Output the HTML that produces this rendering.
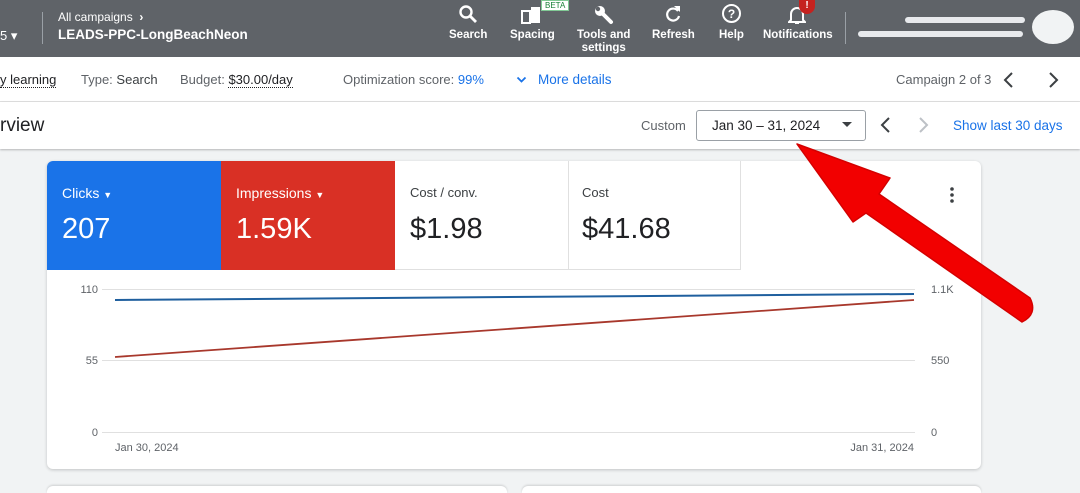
<!DOCTYPE html>
<html><head><meta charset="utf-8"><style>
*{margin:0;padding:0;box-sizing:border-box}
html,body{width:1080px;height:493px;overflow:hidden}
body{background:#f1f3f4;font-family:"Liberation Sans",Arial,sans-serif;position:relative;color:#3c4043}
.a{position:absolute;white-space:nowrap}
.hdr{position:absolute;left:0;top:0;width:1080px;height:57px;background:#5f6368}
.w{color:#fff}
.nl{font-size:11.5px;color:#fff;text-align:center;font-weight:bold;line-height:13px}
.row2{position:absolute;left:0;top:57px;width:1080px;height:45px;background:#fff;border-bottom:1px solid #e0e0e0}
.row3{position:absolute;left:0;top:102px;width:1080px;height:47px;background:#fff;box-shadow:0 1px 2px rgba(0,0,0,.25)}
.t13{font-size:13px;color:#5f6368}
.card{position:absolute;left:47px;top:161px;width:934px;height:308px;background:#fff;border-radius:6px;box-shadow:0 1px 3px rgba(0,0,0,.2);overflow:hidden}
.tab{position:absolute;top:0;height:109px;width:174px}
.tl{position:absolute;left:15px;top:24px;font-size:14px}
.tv{position:absolute;left:15px;top:52px;font-size:29px}
</style></head><body>
<div class="hdr"></div>
<div class="a w" style="left:0;top:28px;font-size:13px">5 ▾</div>
<div class="a" style="left:42px;top:12px;width:1px;height:32px;background:#9aa0a6"></div>
<div class="a w" style="left:58px;top:10px;font-size:12px">All campaigns &nbsp;<b>›</b></div>
<div class="a w" style="left:58px;top:27px;font-size:13.5px;font-weight:bold">LEADS-PPC-LongBeachNeon</div>

<svg class="a" style="left:458px;top:4px" width="20" height="20" viewBox="0 0 20 20"><circle cx="8" cy="8" r="5.5" fill="none" stroke="#fff" stroke-width="2.4"/><path d="M12 12l6 6" stroke="#fff" stroke-width="2.8"/></svg>
<div class="a nl" style="left:449px;top:29px">Search</div>
<svg class="a" style="left:521px;top:5px" width="22" height="20" viewBox="0 0 22 20"><rect x="1" y="6" width="8" height="12" fill="none" stroke="#fff" stroke-width="2"/><rect x="10" y="2" width="9" height="16" fill="#fff"/></svg>
<div class="a" style="left:541px;top:0;background:#fff;color:#188038;font-size:8px;padding:0 3px;border:1px solid #81c995">BETA</div>
<div class="a nl" style="left:510px;top:29px">Spacing</div>
<svg class="a" style="left:592px;top:3px" width="22" height="22" viewBox="0 0 22 22"><circle cx="8" cy="8" r="5" fill="#fff"/><circle cx="6" cy="6" r="2.2" fill="#5f6368"/><path d="M10 10l9 9" stroke="#fff" stroke-width="4" stroke-linecap="round"/></svg>
<div class="a nl" style="left:577px;top:29px">Tools and<br>settings</div>
<svg class="a" style="left:664px;top:4px" width="18" height="20" viewBox="0 0 18 20"><path d="M14 7A6 6 0 1 0 15 12" fill="none" stroke="#fff" stroke-width="2.2"/><path d="M10 2h6v6z" fill="#fff"/></svg>
<div class="a nl" style="left:652px;top:29px">Refresh</div>
<svg class="a" style="left:721px;top:3px" width="21" height="21" viewBox="0 0 21 21"><circle cx="10.5" cy="10.5" r="8.5" fill="none" stroke="#fff" stroke-width="2"/><text x="10.5" y="15" text-anchor="middle" font-size="12" font-weight="bold" fill="#fff" font-family="Liberation Sans">?</text></svg>
<div class="a nl" style="left:719px;top:29px">Help</div>
<svg class="a" style="left:788px;top:5px" width="18" height="20" viewBox="0 0 18 20"><path d="M3 15V9a6 6 0 0 1 12 0v6l2 2H1z" fill="none" stroke="#fff" stroke-width="2"/><path d="M7 18h4" stroke="#fff" stroke-width="2"/></svg>
<div class="a" style="left:799px;top:0;width:16px;height:14px;border-radius:0 0 8px 8px;background:#c5221f;color:#fff;font-size:10px;text-align:center;font-weight:bold">!</div>
<div class="a nl" style="left:763px;top:29px">Notifications</div>
<div class="a" style="left:845px;top:12px;width:1px;height:32px;background:#9aa0a6"></div>
<div class="a" style="left:905px;top:17px;width:120px;height:6px;background:#e8eaed;border-radius:3px"></div>
<div class="a" style="left:858px;top:31px;width:165px;height:6px;background:#e8eaed;border-radius:3px"></div>
<div class="a" style="left:1032px;top:10px;width:42px;height:34px;background:#f1f3f4;border-radius:50%"></div>

<div class="row2"></div>
<div class="a" style="left:0;top:72px;font-size:13px;color:#202124;border-bottom:1px dotted #202124">y learning</div>
<div class="a t13" style="left:81px;top:72px">Type: <span style="color:#3c4043">Search</span></div>
<div class="a t13" style="left:180px;top:72px">Budget: <span style="color:#202124;border-bottom:1px dotted #202124">$30.00/day</span></div>
<div class="a t13" style="left:343px;top:72px">Optimization score: <span style="color:#1a73e8">99%</span></div>
<svg class="a" style="left:516px;top:76px" width="11" height="8" viewBox="0 0 11 8"><path d="M1.5 1.5l4 4 4-4" fill="none" stroke="#1a73e8" stroke-width="1.8"/></svg>
<div class="a" style="left:538px;top:72px;font-size:13.5px;color:#1a73e8">More details</div>
<div class="a t13" style="left:896px;top:72px">Campaign 2 of 3</div>
<svg class="a" style="left:1002px;top:71px" width="14" height="18" viewBox="0 0 14 18"><path d="M10 2L3 9l7 7" fill="none" stroke="#3c4043" stroke-width="2"/></svg>
<svg class="a" style="left:1046px;top:71px" width="14" height="18" viewBox="0 0 14 18"><path d="M4 2l7 7-7 7" fill="none" stroke="#3c4043" stroke-width="2"/></svg>

<div class="row3"></div>
<div class="a" style="left:0;top:115px;font-size:19px;color:#202124">rview</div>
<div class="a t13" style="left:641px;top:118px">Custom</div>
<div class="a" style="left:696px;top:110px;width:170px;height:31px;border:1px solid #9aa0a6;border-radius:3px;background:#fff"></div>
<div class="a" style="left:712px;top:118px;font-size:13.5px;color:#202124">Jan 30 – 31, 2024</div>
<svg class="a" style="left:842px;top:122px" width="10" height="6" viewBox="0 0 10 6"><path d="M0 0h10L5 5z" fill="#3c4043"/></svg>
<svg class="a" style="left:879px;top:116px" width="14" height="18" viewBox="0 0 14 18"><path d="M10 2L3 9l7 7" fill="none" stroke="#3c4043" stroke-width="2"/></svg>
<svg class="a" style="left:916px;top:116px" width="14" height="18" viewBox="0 0 14 18"><path d="M4 2l7 7-7 7" fill="none" stroke="#bdc1c6" stroke-width="2"/></svg>
<div class="a" style="left:953px;top:118px;font-size:13.5px;color:#1a73e8">Show last 30 days</div>

<div class="card">
<div class="tab" style="left:0;background:#1a73e8;color:#fff"><div class="tl">Clicks <span style="font-size:9px">▼</span></div><div class="tv">207</div></div>
<div class="tab" style="left:174px;background:#d93025;color:#fff"><div class="tl">Impressions <span style="font-size:9px">▼</span></div><div class="tv">1.59K</div></div>
<div class="tab" style="left:348px;border-right:1px solid #e0e0e0;border-bottom:1px solid #e0e0e0"><div class="tl" style="color:#3c4043;font-size:13px">Cost / conv.</div><div class="tv" style="color:#202124">$1.98</div></div>
<div class="tab" style="left:520px;border-right:1px solid #e0e0e0;border-bottom:1px solid #e0e0e0"><div class="tl" style="color:#3c4043;font-size:13px">Cost</div><div class="tv" style="color:#202124">$41.68</div></div>
<svg class="a" style="left:902px;top:25px" width="6" height="18" viewBox="0 0 6 18"><circle cx="3" cy="3" r="1.8" fill="#3c4043"/><circle cx="3" cy="9" r="1.8" fill="#3c4043"/><circle cx="3" cy="15" r="1.8" fill="#3c4043"/></svg>
</div>
<svg class="a" style="left:0;top:0" width="1080" height="493">
<g stroke="#e0e0e0" stroke-width="1"><line x1="102" y1="289.5" x2="915" y2="289.5"/><line x1="102" y1="360.5" x2="915" y2="360.5"/><line x1="102" y1="432.5" x2="915" y2="432.5"/></g>
<line x1="115" y1="300" x2="914" y2="294" stroke="#1f5f9e" stroke-width="2"/>
<line x1="115" y1="357" x2="914" y2="300" stroke="#a8382c" stroke-width="1.8"/>
<g font-family="Liberation Sans" font-size="11" fill="#5f6368">
<text x="98" y="293" text-anchor="end">110</text><text x="98" y="364" text-anchor="end">55</text><text x="98" y="436" text-anchor="end">0</text>
<text x="931" y="293">1.1K</text><text x="931" y="364">550</text><text x="931" y="436">0</text>
<text x="115" y="451">Jan 30, 2024</text><text x="914" y="451" text-anchor="end">Jan 31, 2024</text></g>
<path d="M797 144 L890 178 L879 194 L1030 298 Q1038 314 1022 322 L866 213 L853 222 Z" fill="#f20000" stroke="#d40000" stroke-width="1.5" stroke-linejoin="round"/>
</svg>
<div class="a" style="left:47px;top:486px;width:460px;height:7px;background:#fff;border-radius:6px 6px 0 0;box-shadow:0 -1px 2px rgba(0,0,0,.15)"></div>
<div class="a" style="left:522px;top:486px;width:459px;height:7px;background:#fff;border-radius:6px 6px 0 0;box-shadow:0 -1px 2px rgba(0,0,0,.15)"></div>
</body></html>
